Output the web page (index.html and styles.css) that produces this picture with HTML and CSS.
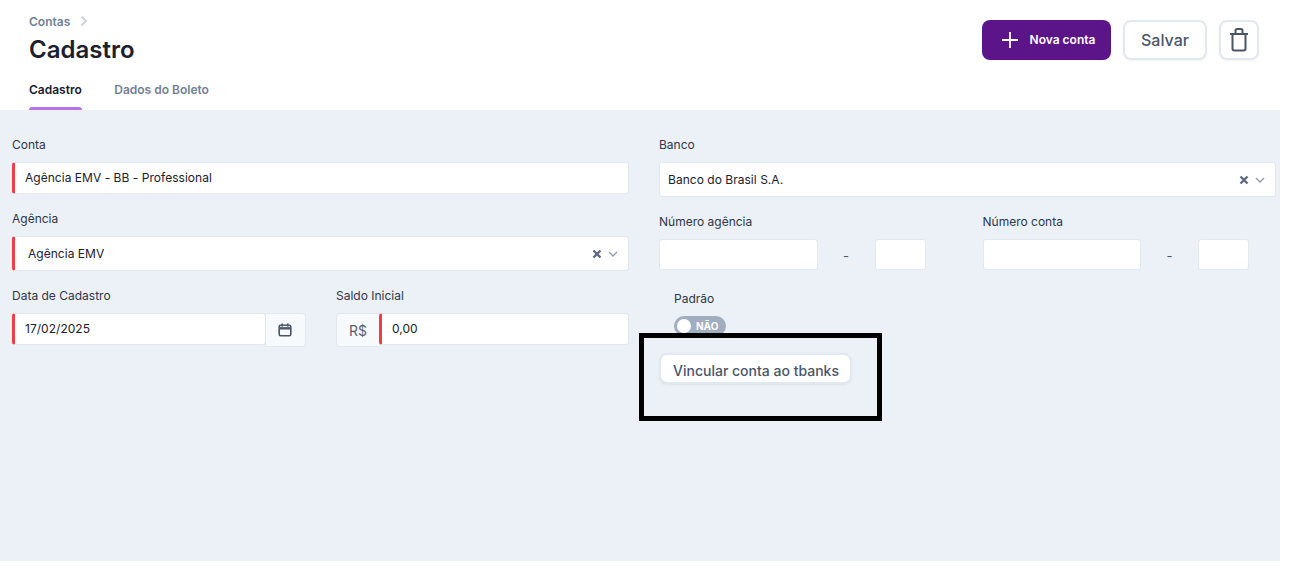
FILE: index.html
```html
<!DOCTYPE html>
<html lang="pt-BR">
<head>
<meta charset="utf-8">
<title>Cadastro</title>
<link rel="stylesheet" href="styles.css">
</head>
<body>
<div class="page">
  <header class="top">
    <div class="top-row">
      <div class="heading">
        <nav class="crumb"><span>Contas</span>
          <svg class="crumb-icon" viewBox="0 0 8 12" width="8" height="12"><path d="M1.5 1.5 6 6l-4.500 4.500" fill="none" stroke="#cbd5e0" stroke-width="2"/></svg>
        </nav>
        <h1 class="title">Cadastro</h1>
      </div>
      <div class="actions">
        <button class="btn btn-primary">
          <svg viewBox="0 0 16 16" width="16" height="16"><path d="M8 0v16M0 8h16" stroke="#fff" stroke-width="1.800"/></svg>
          <span>Nova conta</span>
        </button>
        <button class="btn btn-outline">Salvar</button>
        <button class="btn btn-icon" aria-label="Excluir">
          <svg viewBox="0 0 20 24" width="20" height="24" fill="none" stroke="#4a5568" stroke-width="2"><path d="M1 6h18M3.500 6v14.500a2 2 0 0 0 2 2h9a2 2 0 0 0 2-2V6M6.500 6V2.500a1.500 1.500 0 0 1 1.500-1.500h4a1.500 1.500 0 0 1 1.500 1.500V6"/></svg>
        </button>
      </div>
    </div>
    <div class="tabs">
      <a class="tab tab-active">Cadastro</a>
      <a class="tab">Dados do Boleto</a>
    </div>
  </header>
  <main class="panel">
    <section class="col">
      <div class="field field-a">
        <label class="label">Conta</label>
        <input class="input req" value="Agência EMV - BB - Professional">
      </div>
      <div class="field field-b">
        <label class="label">Agência</label>
        <div class="select select-req">
          <span class="select-value">Agência EMV</span>
          <svg class="clear" viewBox="0 0 10 10" width="10" height="10"><path d="M1.500 1.500l7 7M8.500 1.500l-7 7" stroke="#5f6b80" stroke-width="2.400"/></svg>
          <svg class="caret" viewBox="0 0 10 6" width="10" height="6"><path d="M1 1l4 4 4-4" fill="none" stroke="#8e99ab" stroke-width="1.300"/></svg>
        </div>
      </div>
      <div class="row-two">
        <div class="field">
          <label class="label">Data de Cadastro</label>
          <div class="group">
            <input class="input req grow" value="17/02/2025">
            <span class="addon addon-right">
              <svg viewBox="0 0 14 14" width="14" height="14" fill="none" stroke="#4a5568" stroke-width="1.600"><rect x="1.200" y="2.200" width="11.600" height="10.600" rx="1.500"/><path d="M1.200 5.300h11.600" stroke-width="2.400"/><path d="M4.200 .5v3M9.800 .5v3"/></svg>
            </span>
          </div>
        </div>
        <div class="field">
          <label class="label">Saldo Inicial</label>
          <div class="group">
            <span class="addon addon-left">R$</span>
            <input class="input req grow" value="0,00">
          </div>
        </div>
      </div>
    </section>
    <section class="col">
      <div class="field field-c">
        <label class="label">Banco</label>
        <div class="select">
          <span class="select-value">Banco do Brasil S.A.</span>
          <svg class="clear" viewBox="0 0 10 10" width="10" height="10"><path d="M1.500 1.500l7 7M8.500 1.500l-7 7" stroke="#5f6b80" stroke-width="2.400"/></svg>
          <svg class="caret" viewBox="0 0 10 6" width="10" height="6"><path d="M1 1l4 4 4-4" fill="none" stroke="#8e99ab" stroke-width="1.300"/></svg>
        </div>
      </div>
      <div class="numbers">
        <div class="field">
          <label class="label">Número agência</label>
          <div class="split">
            <input class="input num-main">
            <span class="dash">-</span>
            <input class="input num-digit">
          </div>
        </div>
        <div class="field">
          <label class="label">Número conta</label>
          <div class="split">
            <input class="input num-main">
            <span class="dash">-</span>
            <input class="input num-digit">
          </div>
        </div>
      </div>
      <div class="toggle-field">
        <label class="label">Padrão</label>
        <div class="toggle"><span class="knob"></span><span>NÃO</span></div>
      </div>
      <button class="btn-link">Vincular conta ao tbanks</button>
      <div class="highlight"></div>
    </section>
  </main>
</div>
</body>
</html>
```
FILE: styles.css
```css
* { box-sizing: border-box; }
html, body { margin: 0; background: #fff; }
body { font-family: Inter, "Liberation Sans", sans-serif; color: #1a202c; }
.page { width: 1280px; }

.top { height: 110px; padding: 0 21px 0 29px; display: flex; flex-direction: column; justify-content: space-between; }
.top-row { display: flex; justify-content: space-between; }
.heading { padding-top: 11px; }
.crumb { display: flex; align-items: center; gap: 10px; height: 20px; font-size: 12px; font-weight: 600; color: #718096; }
.title { margin: 2px 0 0; font-size: 24px; line-height: 34px; font-weight: 600; color: #1a202c; }

.actions { display: flex; gap: 12px; padding-top: 20px; }
.btn { height: 40px; border-radius: 8px; display: flex; align-items: center; justify-content: center; font-family: inherit; cursor: pointer; box-shadow: 0 1px 2px rgba(45, 55, 72, .06); }
.btn-primary { width: 129px; gap: 12px; padding: 0 0 2px 4px; background: #5c1589; border: 0; color: #fff; font-size: 12px; font-weight: 600; }
.btn-primary svg { margin-top: 2px; }
.btn-outline { width: 84px; background: #fff; border: 2px solid #e2e8f0; color: #4a5568; font-size: 16px; font-weight: 500; }
.btn-icon { width: 40px; padding: 0; background: #fff; border: 2px solid #e2e8f0; }

.tabs { display: flex; gap: 32.5px; }
.tab { position: relative; height: 40px; padding-top: 12px; font-size: 12px; line-height: 16px; font-weight: 600; color: #718096; }
.tab-active { color: #1a202c; }
.tab-active::after { content: ""; position: absolute; left: 0; right: 0; bottom: 0; height: 3px; border-radius: 3px 3px 0 0; background: #b473e6; }

.panel { height: 451px; padding: 25px 4px 0 12px; background: #ecf0f7; display: grid; grid-template-columns: 617px 617px; column-gap: 30px; align-items: start; }
.col { position: relative; }
.field { min-width: 0; }
.field-a { margin-bottom: 15px; }
.field-b { margin-bottom: 15px; }
.field-c { margin-bottom: 15px; }
.label { display: block; height: 20px; margin-bottom: 7px; font-size: 12px; line-height: 20px; color: #2d3748; }

.input { display: block; width: 100%; height: 32px; padding: 0 10px 2px; background: #fff; border: 1px solid #e2e8f0; border-radius: 3px; font-family: inherit; font-size: 12px; font-weight: 400; letter-spacing: .03px; color: #1a202c; outline: 0; }
.req { border-left: 3px solid #ee3f46; }
.grow { flex: 1; min-width: 0; }

.select { height: 35px; padding: 0 10px 0 8px; display: flex; align-items: center; background: #fff; border: 1px solid #e2e8f0; border-radius: 3px; font-size: 12px; font-weight: 400; letter-spacing: .03px; color: #1a202c; }
.select-req { padding-left: 13px; border-left: 3px solid #ee3f46; }
.select-value { flex: 1; }
.clear { margin-right: 6px; }

.group { display: flex; }
.addon { display: flex; align-items: center; justify-content: center; height: 34px; background: #f7fafc; border: 1px solid #e2e8f0; font-size: 14px; color: #566274; }
.addon-right { width: 41px; margin-left: -1px; padding-right: 2px; border-radius: 0 4px 4px 0; }
.addon-left { width: 43px; border-radius: 4px 0 0 4px; border-right: 0; }

.row-two { display: grid; grid-template-columns: 294px 293px; column-gap: 30px; }

.numbers { display: grid; grid-template-columns: 266.5px 266.5px; column-gap: 57px; }
.split { display: flex; align-items: center; }
.num-main { width: 158.5px; height: 31px; }
.num-digit { width: 51px; height: 31px; }
.dash { width: 57px; padding-top: 3px; text-align: center; font-size: 13px; color: #4a5568; }

.toggle-field { margin: 19px 0 0 15px; }
.toggle { width: 52px; height: 20px; padding: 0 2px 0 3px; display: flex; align-items: center; gap: 5px; border-radius: 10px; background: #a0aec0; color: #fff; font-size: 10px; font-weight: 700; }
.knob { width: 14px; height: 14px; border-radius: 50%; background: #fff; }

.btn-link { display: block; width: 193px; height: 31px; margin: 17px 0 0; padding: 3px 0 0 1px; background: #fff; border: 2px solid #e2e8f0; border-radius: 8px; box-shadow: 0 1px 2px rgba(45, 55, 72, .08); font-family: inherit; font-size: 14px; font-weight: 500; color: #4a5568; }

.highlight { position: absolute; left: -20px; top: 198px; width: 243px; height: 88px; border: 5px solid #000; }
```
